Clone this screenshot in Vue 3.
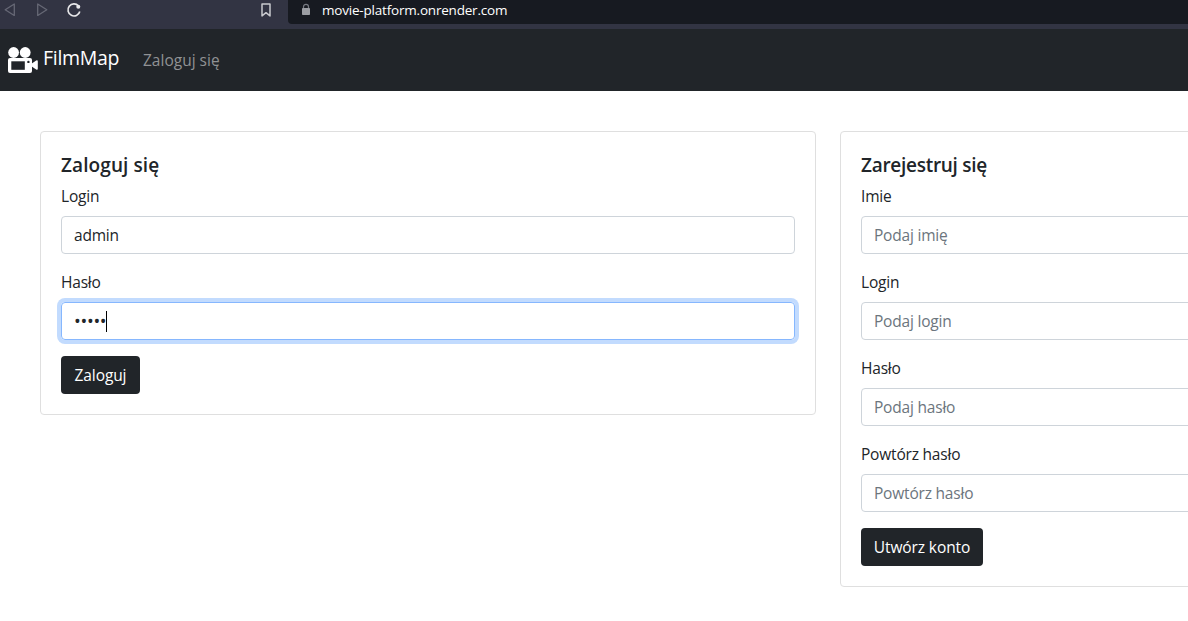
<script setup>
const registerFields = [
  { label: 'Imie', hint: 'Podaj imię' },
  { label: 'Login', hint: 'Podaj login' },
  { label: 'Hasło', hint: 'Podaj hasło' },
  { label: 'Powtórz hasło', hint: 'Powtórz hasło' },
]
</script>

<template>
  <div class="window">
    <div class="chrome">
      <div class="controls">
        <svg class="arrow" width="12" height="16" viewBox="0 0 12 16"><path d="M10.300 4v11.500L1.200 9.800z" /></svg>
        <svg class="arrow next" width="12" height="16" viewBox="0 0 12 16"><path d="M1.700 4v11.500l9.100-5.700z" /></svg>
        <svg class="reload" width="16" height="20" viewBox="0 0 16 20">
          <path d="M12.500 6A6 6 0 1 0 13.800 11.500" />
          <circle cx="12.300" cy="6.700" r="2" />
        </svg>
        <svg class="mark" width="12" height="18" viewBox="0 0 12 18"><path d="M2 3.900h8v12l-4-3.200-4 3.200z" /></svg>
      </div>
      <div class="address">
        <svg class="lock" width="10" height="16" viewBox="0 0 10 16">
          <path d="M2.500 8V6.800a2.500 2.500 0 0 1 5 0V8" />
          <rect x="1" y="8" width="8" height="7" rx=".8" />
        </svg>
        <span class="url">movie-platform.onrender.com</span>
      </div>
    </div>

    <nav class="navbar">
      <svg class="camera" width="30" height="28" viewBox="0 0 30 28">
        <circle cx="5.600" cy="6.500" r="5.400" />
        <circle cx="17.200" cy="6.500" r="5.400" />
        <rect y="12" width="24" height="15" rx="2" />
        <path d="M23 18l5.200-3.600q1.600-.7 1.600 1v7.200q0 1.700-1.600 1L23 20.100z" />
        <rect class="hole" x="3.300" y="15.300" width="13.500" height="8.500" />
        <circle class="hole" cx="20.400" cy="15.900" r="1.200" />
      </svg>
      <span class="brand">FilmMap</span>
      <span class="link">Zaloguj się</span>
    </nav>

    <main class="content">
      <section class="card">
        <h5>Zaloguj się</h5>
        <div class="field">
          <label>Login</label>
          <div class="control">admin</div>
        </div>
        <div class="field">
          <label>Hasło</label>
          <div class="control focused"><span class="dots">•••••</span><i class="caret"></i></div>
        </div>
        <button class="login">Zaloguj</button>
      </section>
      <section class="card">
        <h5 class="long">Zarejestruj się</h5>
        <div v-for="f in registerFields" :key="f.label" class="field">
          <label>{{ f.label }}</label>
          <div class="control hint">{{ f.hint }}</div>
        </div>
        <button class="create">Utwórz konto</button>
      </section>
    </main>
  </div>
</template>

<style>
body { background: #fff; }
html, body { overflow: hidden; }
</style>

<style scoped>
* { box-sizing: border-box; }
.window {
  height: 621px;
  overflow: hidden;
  font: 15.5px/24px "Open Sans", "Noto Sans", sans-serif;
  letter-spacing: -.2px;
  color: #212529;
}
.chrome { display: flex; height: 29px; background: #323443; }
.controls { display: flex; width: 288px; padding-left: 4px; }
svg { display: block; flex: none; }
.arrow { fill: none; stroke: #666875; stroke-width: 1.3; stroke-linejoin: round; }
.next { margin-left: 20px; }
.reload { margin-left: 18px; fill: none; stroke: #e8e8ea; stroke-width: 1.7; }
.reload circle { fill: #e8e8ea; stroke: none; }
.mark { margin-left: auto; margin-right: 16px; fill: none; stroke: #c8c9ce; stroke-width: 1.5; stroke-linejoin: round; }
.address {
  display: flex;
  flex: 1;
  height: 24px;
  padding-left: 13px;
  border-bottom-left-radius: 4px;
  background: #171a21;
}
.lock { fill: #9b9da3; }
.lock path { fill: none; stroke: #777a82; stroke-width: 1.2; }
.url { margin-left: 11px; font-size: 13.5px; line-height: 20px; color: #fff; white-space: nowrap; }
.navbar { display: flex; align-items: center; height: 62px; padding-left: 8px; background: #212529; }
.camera { fill: #fff; }
.camera .hole { fill: #212529; }
.brand { margin-left: 5px; margin-bottom: 4px; width: 100px; font-size: 19.5px; letter-spacing: -.3px; color: #fff; }
.link { letter-spacing: 0; color: #909294; }
.content { display: grid; grid-template-columns: 776px 776px; gap: 24px; align-items: start; padding: 40px 0 0 40px; }
.card { padding: 20px; border: 1px solid #dfdfdf; border-radius: 4px; }
h5 { margin: 0 0 8px; padding-top: 2px; font-size: 19px; line-height: 22px; font-weight: 600; letter-spacing: .1px; }
h5.long { letter-spacing: -.28px; }
.field { margin-bottom: 16px; }
label { display: block; margin-bottom: 8px; }
.control {
  display: flex;
  align-items: center;
  height: 38px;
  padding: 0 12px;
  border: 1px solid #ced4da;
  border-radius: 4px;
}
.hint { color: #6c757d; }
.focused { border-color: #86b7fe; box-shadow: 0 0 0 4px #c2dbfe; }
.dots { width: 32px; font-size: 18px; letter-spacing: -.3px; white-space: nowrap; }
.caret { width: 1px; height: 21px; background: #000; }
button {
  display: block;
  height: 38px;
  padding: 0;
  border: 0;
  border-radius: 4px;
  background: #212529;
  color: #fff;
  font: inherit;
  letter-spacing: -.1px;
}
.login { width: 79px; }
.create { width: 122px; }
</style>
